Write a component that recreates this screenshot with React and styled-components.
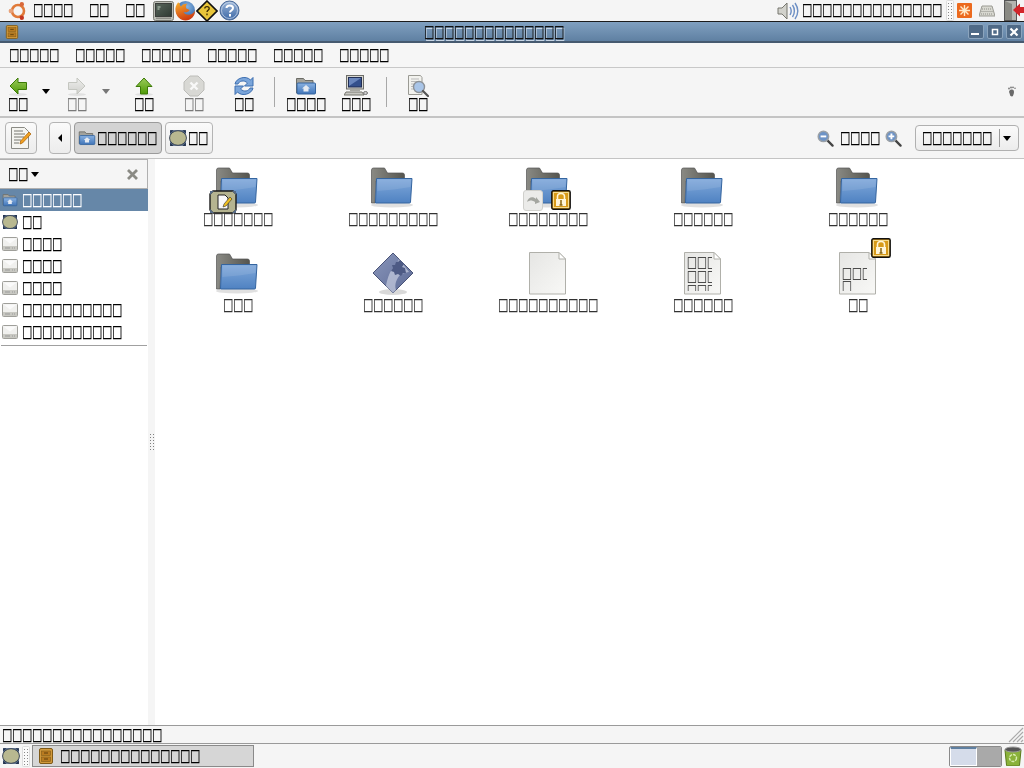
import React from 'react';
import styled, { createGlobalStyle } from 'styled-components';

const Global = createGlobalStyle`
  html, body { margin: 0; padding: 0; background: #f5f5f5; overflow: hidden; }
  * { box-sizing: border-box; }
`;

const tofu = n => '\u25A1'.repeat(n);

const Screen = styled.div`
  width: 1024px; height: 768px; display: flex; flex-direction: column; overflow: hidden;
  font-family: "DejaVu Sans", sans-serif; font-size: 10.58px; color: #000; background: #f5f5f5;
`;
const Label = styled.span`
  display: block; white-space: nowrap; line-height: 14px; height: 14px; will-change: transform;
  transform: translateY(-1px) scaleY(1.6);
  -webkit-text-stroke: 0.2px currentColor;
  color: ${p => p.$color || 'inherit'};
`;

/* ---------- top panel ---------- */
const TopPanel = styled.div`
  height: 22px; flex: none; display: flex; align-items: center; padding-left: 8px; background: #f5f5f5;
  border-bottom: 1px solid #1c1c1c;
`;
const PanelMenu = styled.div`margin-left: ${p => p.$ml}px; padding-bottom: 1px;`;
const PanelIcon = styled.div`
  flex: none; display: flex; width: ${p => p.$w}px; height: 21px; margin-left: ${p => p.$ml || 0}px; align-items: center; justify-content: center;
`;
const Spacer = styled.div`flex: 1;`;

/* ---------- title bar ---------- */
const TitleBar = styled.div`
  height: 21px; flex: none; display: flex; align-items: center; position: relative;
  background: linear-gradient(#80a0c0, #5f80a2); border-bottom: 2px solid #465a70; padding-left: 5px;
`;
const TitleText = styled.div`
  position: absolute; left: 424px; top: 3px; color: #111; text-shadow: 1px 1px 0 #c6d4e4;
`;
const WinButtons = styled.div`margin-left: auto; display: flex; gap: 3px; padding-right: 2px;`;
const WinButton = styled.div`
  width: 16px; height: 15px; border: 1px solid #8ba4bd; border-radius: 2px; background: #4f6a87;
  display: flex; align-items: center; justify-content: center;
`;

/* ---------- menu ---------- */
const MenuBar = styled.div`
  height: 25px; flex: none; display: flex; gap: 16px; padding: 5px 0 0 9px; background: #f6f6f6;
  border-bottom: 1px solid #c8c8c8;
`;

/* ---------- toolbar ---------- */
const Toolbar = styled.div`
  height: 50px; flex: none; display: flex; align-items: flex-start; background: #f5f5f5;
  border-bottom: 2px solid #c4c4c4;
`;
const ToolButton = styled.div`
  width: ${p => p.$w}px; flex: none; height: 100%;
  display: flex; flex-direction: column; align-items: center; padding-top: 7px;
  color: ${p => p.$off ? '#7a7a7a' : '#000'};
`;
const ToolIcon = styled.div`width: ${p => p.$w || 22}px; height: 22px;`;
const DropArrow = styled.div`
  width: ${p => p.$w}px; flex: none; height: 100%; display: flex; justify-content: center; padding-top: 21px;
  &::after { content: ''; width: 0; height: 0; border: 4px solid transparent; border-bottom: 0; border-top: 5px solid ${p => p.$off ? '#777' : '#000'}; }
`;
const ToolSep = styled.div`
  width: 1px; height: 30px; margin: 9px 0 0 ${p => p.$ml}px; background: #a8a8a8; flex: none;
`;
const Throbber = styled.div`margin-left: auto; padding: 18px 8px 0 0;`;

/* ---------- location bar ---------- */
const LocationBar = styled.div`
  height: 41px; flex: none; display: flex; align-items: center; padding-left: 5px;
  background: #f5f5f5; border-bottom: 1px solid #c4c4c4;
`;
const CrumbButton = styled.div`
  height: 32px; width: ${p => p.$w}px; margin-left: ${p => p.$ml || 0}px; flex: none;
  border: 1px solid ${p => p.$on ? '#9b9b9b' : '#b4b4b4'}; border-radius: 4px;
  background: ${p => p.$on ? '#d3d3d3' : 'linear-gradient(#fafafa, #ececec)'};
  display: flex; align-items: center; justify-content: ${p => p.$center ? 'center' : 'flex-start'}; padding-left: ${p => p.$center ? 0 : 3}px; gap: 1px;
`;
const LeftCaret = styled.div`
  width: 0; height: 0; border: 4px solid transparent; border-left: 0; border-right: 4px solid #000;
`;
const ZoomGroup = styled.div`margin-left: auto; display: flex; align-items: center;`;
const ZoomText = styled.div`margin: 0 5px 0 6px;`;
const Combo = styled.div`
  width: 104px; height: 26px; margin: 0 5px 0 13px; border: 1px solid #b0b0b0; border-radius: 4px;
  background: linear-gradient(#fafafa, #ececec); display: flex; align-items: center; padding-left: 6px;
`;
const ComboDivider = styled.div`width: 1px; height: 18px; background: #9a9a9a; margin-left: 7px;`;
const ComboArrow = styled.div`
  margin-left: 3px; width: 0; height: 0; border: 4px solid transparent; border-bottom: 0; border-top: 5px solid #000;
`;

/* ---------- body ---------- */
const Body = styled.div`flex: 1; min-height: 0; display: flex;`;
const Sidebar = styled.div`width: 148px; flex: none; background: #fff; display: flex; flex-direction: column;`;
const SideHeader = styled.div`
  height: 30px; flex: none; background: #f5f5f5; border: 1px solid #b0b0b0; border-left: 0; display: flex; align-items: center; padding: 0 8px;
`;
const SideCaret = styled.div`
  margin-left: 3px; width: 0; height: 0; border: 4px solid transparent; border-bottom: 0; border-top: 5px solid #000;
`;
const SideClose = styled.div`margin-left: auto; display: flex;`;
const SideRow = styled.div`
  height: 22px; flex: none; display: flex; align-items: center; gap: 4px; padding-left: 2px;
  background: ${p => p.$on ? '#6687a8' : 'transparent'}; color: ${p => p.$on ? '#fff' : '#000'};
`;
const SideRule = styled.div`height: 1px; margin: 2px 1px 0; background: #a0a0a0;`;
const Splitter = styled.div`
  width: 7px; flex: none; background: #f5f5f5; display: flex; align-items: center; justify-content: center;
`;
const Grip = styled.div`
  width: 6px; height: 18px;
  background-image: radial-gradient(#808080 0.9px, transparent 1px);
  background-size: 3px 3px;
`;
const IconGrid = styled.div`
  flex: 1; background: #fff; display: grid; grid-template-columns: repeat(5, 155px); grid-auto-rows: 86px; align-content: start; padding: 6px 0 0 5px;
`;
const Cell = styled.div`display: flex; flex-direction: column; align-items: center;`;
const BigIcon = styled.div`width: 48px; height: 48px; position: relative;`;
const Emblem = styled.div`position: absolute; left: ${p => p.$x}px; top: ${p => p.$y}px; display: flex;`;
const CellLabel = styled(Label)`color: #333; margin-top: -1px;`;
const DocSvg = styled.svg`display: block; will-change: transform;`;

/* ---------- status ---------- */
const StatusBar = styled.div`
  height: 19px; flex: none; display: flex; align-items: center; padding-left: 2px;
  background: #f5f5f5; border-top: 1px solid #9a9a9a; border-bottom: 1px solid #9a9a9a; position: relative;
`;
const ResizeGrip = styled.div`position: absolute; right: 0; bottom: 0; display: flex;`;

/* ---------- bottom panel ---------- */
const BottomPanel = styled.div`
  height: 24px; flex: none; display: flex; align-items: center; padding-left: 2px; background: #f5f5f5;
`;
const Task = styled.div`
  width: 222px; height: 22px; margin-left: 2px; background: #d6d6d6; border: 1px solid #8a8a8a; display: flex; align-items: center; padding-left: 5px; gap: 6px;
`;
const Workspace = styled.div`
  margin-left: auto; width: 53px; height: 21px; display: flex; border: 1px solid #8a8a8a; border-radius: 2px; overflow: hidden;
`;
const WsActive = styled.div`flex: 1; background: #d5dcea; border: 1px solid #fff; border-top: 2px solid #5f7fa0;`;
const WsIdle = styled.div`flex: 1; background: #a9a9a9;`;
const TrashSlot = styled.div`margin: 0 2px 0 2px; display: flex;`;

/* ---------- icons ---------- */
const Ubuntu = () => (
  <svg width="20" height="20" viewBox="0 0 20 20">
    <circle cx="10" cy="10" r="6" fill="none" stroke="#e07a3a" strokeWidth="2.6" />
    <circle cx="2.800" cy="10" r="2.200" fill="#e8a27a" />
    <circle cx="13.800" cy="3.200" r="2.200" fill="#d9683a" />
    <circle cx="13.800" cy="16.800" r="2.200" fill="#c4351f" />
  </svg>
);
const Terminal = () => (
  <svg width="21" height="20" viewBox="0 0 21 20">
    <defs><linearGradient id="tms" x1="0" y1="0" x2="1" y2="1"><stop offset="0" stopColor="#59665c" /><stop offset="1" stopColor="#2f3a33" /></linearGradient></defs>
    <rect x="0.500" y="0.500" width="20" height="19" rx="2" fill="#bcbeb6" stroke="#7c7d76" />
    <rect x="2.500" y="2.500" width="16" height="13" fill="url(#tms)" stroke="#3c3f3c" />
    <path d="M4.500 6h3M4.500 8h2" stroke="#c4d6c4" />
    <rect x="3" y="16.500" width="15" height="1.500" fill="#8d8e88" />
  </svg>
);
const Firefox = () => (
  <svg width="22" height="22" viewBox="0 0 22 22">
    <defs><radialGradient id="ffg" cx="0.6" cy="0.3" r="0.7"><stop offset="0" stopColor="#86b4e2" /><stop offset="1" stopColor="#2a5b9e" /></radialGradient>
    <linearGradient id="fff" x1="0" y1="0" x2="0.4" y2="1"><stop offset="0" stopColor="#f7b02e" /><stop offset="1" stopColor="#cf3d10" /></linearGradient></defs>
    <circle cx="11.500" cy="10.500" r="9.500" fill="url(#ffg)" />
    <path d="M4 2.500C2 5 1 8 1.500 11c.8 5.500 5 9.500 10 9.500 5.500 0 9.700-4.500 9.500-10-1 2-2.500 3.500-4.500 4-3 1-6.500-.5-7-2.500 2 .8 5 0 6-1.500.3-1-1.500-1.500-3-1.800C11.500 7 11.500 5 13.500 3.800 10 3.500 8 5 7 6.500 6 5.500 5.500 4 5.500 3 5 3 4.500 2.800 4 2.500z" fill="url(#fff)" />
  </svg>
);
const HelpDiamond = () => (
  <svg width="22" height="22" viewBox="0 0 22 22">
    <path d="M11 1l10 10-10 10L1 11z" fill="#e8c53a" stroke="#111" strokeWidth="1.600" />
    <path d="M8.800 8.500c0-2.500 4.400-2.500 4.400 0 0 1.800-2.200 1.800-2.200 3.500M11 13.500v1.800" fill="none" stroke="#3a2a00" strokeWidth="1.300" />
  </svg>
);
const HelpCircle = () => (
  <svg width="21" height="21" viewBox="0 0 21 21">
    <defs><linearGradient id="hcg" x1="0" y1="0" x2="0" y2="1"><stop offset="0" stopColor="#9cb6d8" /><stop offset="1" stopColor="#3b67a6" /></linearGradient></defs>
    <circle cx="10.500" cy="10.500" r="9.500" fill="url(#hcg)" stroke="#4a6a99" />
    <circle cx="10.500" cy="10.500" r="8" fill="none" stroke="#d5e0ee" strokeOpacity="0.7" />
    <path d="M7.500 8c0-3.500 6.500-3.500 6.500 0 0 2.500-3 2.500-3 4.500M11 14v2.500" fill="none" stroke="#fff" strokeWidth="2" />
  </svg>
);
const Speaker = () => (
  <svg width="22" height="20" viewBox="0 0 22 20">
    <path d="M1 7h4l5-5v16l-5-5H1z" fill="#d2d2cc" stroke="#77776f" />
    <path d="M13 6c1.500 2.500 1.500 5.500 0 8M15.500 4c2.500 3.500 2.500 8.500 0 12M18 2c3.500 5 3.500 11 0 16" fill="none" stroke="#6d8fc4" strokeWidth="1.400" />
  </svg>
);
const HandleDots = () => (
  <svg width="8" height="21" viewBox="0 0 8 21">
    <rect x="0.500" y="0.500" width="7" height="20" rx="1" fill="#fafafa" stroke="#ddd" />
    {[3, 6, 9, 12, 15, 18].map(y => <g key={y}><rect x="2" y={y} width="1" height="1" fill="#888" /><rect x="5" y={y} width="1" height="1" fill="#888" /></g>)}
  </svg>
);
const Notifier = () => (
  <svg width="15" height="15" viewBox="0 0 15 15">
    <rect width="15" height="15" rx="1" fill="#ec6a1e" />
    <path d="M7.500 2v11M2 7.500h11M3.500 3.500l8 8M11.500 3.500l-8 8" stroke="#ffe9c8" strokeWidth="1.400" />
  </svg>
);
const Keyboard = () => (
  <svg width="16" height="12" viewBox="0 0 16 12">
    <path d="M3 1h10l3 10H0z" fill="#d8d8d0" stroke="#9a9a92" />
    <path d="M3 4h10M2.500 6.500h11M2 9h12" stroke="#8e8e88" strokeDasharray="1 1" />
  </svg>
);
const Door = () => (
  <svg width="20" height="21" viewBox="0 0 20 21">
    <rect x="0.500" y="0.500" width="12" height="20" fill="#b5b5b0" stroke="#555" />
    <path d="M1 1l7 3v16H1z" fill="#8a8a84" />
    <path d="M20 7h-4V3.500L9 10l7 6.500V13h4z" fill="#d2262a" />
  </svg>
);
const Cabinet = ({ s = 16 }) => (
  <svg width={s} height={s} viewBox="0 0 16 16" style={{ flex: 'none' }}>
    <rect x="1.500" y="0.500" width="13" height="15" rx="1.500" fill="#d29a3c" stroke="#7f5a18" />
    <rect x="3.500" y="3" width="9" height="4.500" fill="#b97b20" stroke="#7f5a18" strokeWidth="0.600" />
    <rect x="3.500" y="9" width="9" height="4.500" fill="#b97b20" stroke="#7f5a18" strokeWidth="0.600" />
    <path d="M6 5h4M6 11h4" stroke="#5c3f0c" />
  </svg>
);
const Arrow = ({ dir, off }) => {
  const from = off ? '#eeeeec' : '#9ccb5c', to = off ? '#cfd0cc' : '#4e9a06', line = off ? '#c4c6c0' : '#3c7a06';
  const id = `ar${dir}${off ? 'o' : ''}`;
  const d = dir === 'left' ? 'M3 11l8-8v4.500h8.500v7H11V19z' : dir === 'right' ? 'M19 11l-8-8v4.500H2.500v7H11V19z' : 'M11 3l8 8.500h-4.500V19h-7v-7.500H3z';
  return (
    <svg width="22" height="22" viewBox="0 0 22 22">
      <defs><linearGradient id={id} x1="0" y1="0" x2="0" y2="1"><stop offset="0" stopColor={from} /><stop offset="1" stopColor={to} /></linearGradient></defs>
      <ellipse cx="11" cy="19.500" rx="9" ry="1.500" fill="#000" opacity="0.08" />
      <path d={d} fill={`url(#${id})`} stroke={line} />
    </svg>
  );
};
const Stop = () => (
  <svg width="22" height="22" viewBox="0 0 22 22">
    <path d="M7 1h8l6 6v8l-6 6H7l-6-6V7z" fill="#d8d8d4" stroke="#bcbcb8" strokeLinejoin="round" />
    <path d="M7.500 7.500l7 7M14.500 7.500l-7 7" stroke="#f8f8f8" strokeWidth="2.400" />
  </svg>
);
const Reload = () => (
  <svg width="22" height="22" viewBox="0 0 22 22">
    <path d="M2 9C3 3 13 0 17.500 5L20 2.500V11h-8.500l3-3C11 4.500 6 6 5 9z" fill="#7aa5da" stroke="#3d6eb0" />
    <path d="M20 13c-1 6-11 9-15.500 4L2 19.500V11h8.500l-3 3C11 17.500 16 16 17 13z" fill="#7aa5da" stroke="#3d6eb0" />
  </svg>
);
const HomeFolder = ({ s = 22 }) => (
  <svg width={s} height={s} viewBox="0 0 22 22" style={{ flex: 'none' }}>
    <defs><linearGradient id="hfb" x1="0" y1="0" x2="0" y2="1"><stop offset="0" stopColor="#8ab2e2" /><stop offset="1" stopColor="#3f74b8" /></linearGradient></defs>
    <path d="M1.500 18V3.500h7l1.500 2h8V18z" fill="#a2a29c" stroke="#6c6c66" />
    <rect x="2" y="8" width="18.500" height="11" rx="1" fill="url(#hfb)" stroke="#34649f" />
    <path d="M11 10l4 3.500h-1.500V16.500h-5V13.500H7z" fill="#e4eaf2" />
  </svg>
);
const Computer = () => (
  <svg width="24" height="22" viewBox="0 0 24 22">
    <rect x="2.500" y="0.500" width="17" height="13.500" fill="#d6d6d0" stroke="#6d6d68" />
    <rect x="4.500" y="2.500" width="13" height="9.500" fill="#34508c" stroke="#222f55" />
    <path d="M5 3h12L5 11z" fill="#6a86bc" />
    <path d="M6 14v2h10v-2z" fill="#a8a8a2" />
    <path d="M2 17h16l2 3H0z" fill="#c8c8c2" stroke="#77776f" />
    <ellipse cx="21.500" cy="18" rx="2" ry="1.500" fill="#ccc" stroke="#777" />
  </svg>
);
const Magnifier = ({ size = 22, sym }) => (
  <svg width={size} height={size} viewBox="0 0 18 18" style={{ display: 'block' }}>
    <path d="M10.500 10.500L16.500 16.500" stroke="#444" strokeWidth="2.400" strokeLinecap="round" />
    <circle cx="6.800" cy="6.800" r="5.500" fill="#6d93c6" stroke="#9aa0a6" strokeWidth="1.600" />
    {sym === 'minus' && <path d="M3.800 6.800h6" stroke="#fff" strokeWidth="2" />}
    {sym === 'plus' && <path d="M3.800 6.800h6M6.800 3.800v6" stroke="#fff" strokeWidth="2" />}
  </svg>
);
const SearchDoc = () => (
  <svg width="22" height="22" viewBox="0 0 22 22">
    <path d="M1.500 0.500h12l1.500 2v17H1.500z" fill="#f2f2ee" stroke="#9a9a94" />
    <path d="M4 4h8M4 6.500h8M4 9h5M4 11.500h4M4 14h4" stroke="#bbb" />
    <circle cx="12" cy="12" r="5.500" fill="#a9c5e8" stroke="#8d9298" strokeWidth="1.400" />
    <path d="M16 16l5 5" stroke="#555" strokeWidth="2.200" strokeLinecap="round" />
  </svg>
);
const Foot = () => (
  <svg width="9" height="11" viewBox="0 0 9 11">
    <path d="M3 4c3-1 4 0 4 2 0 2-1 3-1 4-1 1-3 0-3-1 0-2-2-3 0-5z" fill="#6a6a6a" />
    <circle cx="2" cy="2.500" r="0.900" fill="#777" /><circle cx="4" cy="1.500" r="0.900" fill="#777" /><circle cx="6" cy="1.300" r="0.900" fill="#777" /><circle cx="8" cy="2.200" r="0.800" fill="#777" />
  </svg>
);
const NoteIcon = () => (
  <svg width="22" height="24" viewBox="0 0 22 24">
    <path d="M1.500 1.500h13l4 4v17h-17z" fill="#f4f4f0" stroke="#8a8a84" />
    <path d="M4 5h9M4 8h11M4 11h10M4 14h7M4 17h5" stroke="#77776f" />
    <path d="M10 18l.6-3L19 6l2 2-8.500 9z" fill="#f0a020" stroke="#a65c00" strokeWidth="0.700" />
  </svg>
);
const Network = ({ s = 16 }) => (
  <svg width={s} height={s} viewBox="0 0 16 16" style={{ flex: 'none' }}>
    <rect x="1" y="1" width="14" height="14" fill="#5a6f8c" />
    <ellipse cx="8" cy="8" rx="7.500" ry="6.500" fill="#b8b890" stroke="#2e3a4e" strokeWidth="0.800" />
    <path d="M1 1l3 0-3 3zM15 1l-3 0 3 3zM1 15l3 0-3-3zM15 15l-3 0 3-3z" fill="#24344f" />
  </svg>
);
const CloseX = () => (
  <svg width="13" height="13" viewBox="0 0 13 13">
    <path d="M2 2l9 9M11 2l-9 9" stroke="#8a8a84" strokeWidth="2.800" />
  </svg>
);
const Drive = () => (
  <svg width="16" height="16" viewBox="0 0 16 16" style={{ flex: 'none' }}>
    <rect x="0.500" y="1.500" width="15" height="13" rx="1" fill="#f0f0ee" stroke="#9f9f9a" />
    <path d="M1.500 2.500l6.500 5 6.500-5z" fill="#fafafa" />
    <rect x="1" y="10" width="14" height="4" fill="#c8c8c2" />
    <path d="M3 12h5M10 12h1M12 12h1" stroke="#999" />
  </svg>
);
const BigFolder = () => (
  <svg width="48" height="48" viewBox="1 0 48 48" style={{ display: 'block' }}>
    <defs>
      <linearGradient id="bfg" x1="0" y1="0" x2="1" y2="0"><stop offset="0" stopColor="#8a8a84" /><stop offset="1" stopColor="#55554f" /></linearGradient>
      <linearGradient id="bfb" x1="0" y1="0" x2="0" y2="1"><stop offset="0" stopColor="#80a8da" /><stop offset="1" stopColor="#4f82c2" /></linearGradient>
    </defs>
    <ellipse cx="24" cy="40" rx="21" ry="2.500" fill="#000" opacity="0.12" />
    <path d="M3.500 38V5q0-2 2-2h11l3 5h15q2 0 2 2v6H8l-1 22z" fill="url(#bfg)" stroke="#555" strokeWidth="0.700" />
    <path d="M8.500 13.500H44L42.500 37a1 1 0 0 1-1 1H7.500z" fill="url(#bfb)" stroke="#34649f" />
    <path d="M9.500 14.500H43L42.500 22C32 24 20 25 9.300 26z" fill="#fff" opacity="0.1" />
  </svg>
);
const Package = () => (
  <svg width="48" height="48" viewBox="0 0 48 48" style={{ display: 'block' }}>
    <defs><linearGradient id="pkg" x1="0" y1="0" x2="1" y2="1"><stop offset="0" stopColor="#8a96ba" /><stop offset="1" stopColor="#5c6a96" /></linearGradient></defs>
    <ellipse cx="24" cy="41" rx="14" ry="3" fill="#000" opacity="0.15" />
    <path d="M24 2l20 20-20 20L4 22z" fill="url(#pkg)" stroke="#4a5478" />
    <path d="M30 8c-2 6-8 10-10 16-2 5-3 10-3 11l7 7 3-3c-2-6 1-12 5-16 4-1 6-2 8-2z" fill="#c8cde0" opacity="0.7" />
    <path d="M31 9l4 4-2 3 3 1 1 5-3 0-2 3-3-2-3 1-1-3-3-1 2-3-1-3 3 0 1-3 2 0z" fill="#4d5a84" />
  </svg>
);
const Doc = ({ lines, clip, first = 11, pitch = 14 }) => (
  <DocSvg width="48" height="48" viewBox="1 0 48 48">
    <defs>
      <linearGradient id="dcg" x1="0" y1="0" x2="1" y2="1"><stop offset="0" stopColor="#e6e6e4" /><stop offset="1" stopColor="#f8f8f6" /></linearGradient>
      <clipPath id={`dc${clip}`}><rect x="8" y="2" width="26" height="38" /></clipPath>
    </defs>
    <path d="M6.500 1.500H36l6.500 6.500v35H6.500z" fill="url(#dcg)" stroke="#b0b0aa" />
    <path d="M36 1.500V8h6.500z" fill="#fff" stroke="#b0b0aa" />
    {lines && (
      <g clipPath={`url(#dc${clip})`}>
        {lines.map((l, i) => (
          <text key={i} transform={`translate(9 ${first + 5.5 + i * pitch}) scale(1 1.4)`} fontFamily="DejaVu Sans" fontSize="10.58" fill="#111">{tofu(l)}</text>
        ))}
      </g>
    )}
  </DocSvg>
);
const EmblemNote = () => (
  <svg width="28" height="24" viewBox="0 0 28 24">
    <path d="M4 1h20l3 3v16l-3 3H4l-3-3V4z" fill="#b5b490" stroke="#1a1a1a" strokeWidth="1.400" />
    <path d="M1 1h4L1 5zM27 1h-4l4 4zM1 23h4l-4-4zM27 23h-4l4-4z" fill="#566b86" />
    <path d="M9 5h7l3 3v11H9z" fill="#fafafa" stroke="#222" />
    <path d="M14 17l1-3 6-7 2 2-6 7z" fill="#f0c020" stroke="#333" strokeWidth="0.600" />
  </svg>
);
const EmblemLink = () => (
  <svg width="20" height="21" viewBox="0 0 20 21">
    <rect x="0.500" y="0.500" width="19" height="20" rx="2.500" fill="#ebebe9" stroke="#d0d0cc" />
    <path d="M4 12c1-5 6-6 9-3V7l4 5-5 2v-2c-3-2-5-2-8 0z" fill="#a4a6a0" />
  </svg>
);
const EmblemLock = () => (
  <svg width="20" height="20" viewBox="0 0 20 20">
    <rect x="0.800" y="0.800" width="18.400" height="18.400" rx="1.500" fill="#d89a18" stroke="#111" strokeWidth="1.400" />
    <rect x="2.500" y="2.500" width="15" height="15" fill="none" stroke="#f6dc90" />
    <path d="M6.500 9V6.500a3.500 3 0 0 1 7 0V9" fill="none" stroke="#fff5d8" strokeWidth="1.600" />
    <rect x="5" y="9" width="10" height="7" fill="#fff5d8" />
    <path d="M10 10v5M8.500 15h3" stroke="#8a6510" strokeWidth="1.500" />
  </svg>
);
const ResizeLines = () => (
  <svg width="16" height="16" viewBox="0 0 16 16">
    <path d="M15 1L1 15M15 5L5 15M15 9l-6 6M15 13l-2 2" stroke="#aaa" strokeWidth="1.200" />
  </svg>
);
const Trash = () => (
  <svg width="18" height="20" viewBox="0 0 18 20">
    <path d="M1 4h16l-1.500 15a1 1 0 0 1-1 1H3.500a1 1 0 0 1-1-1z" fill="#8ab23a" stroke="#5a7a1a" />
    <ellipse cx="9" cy="3.500" rx="8" ry="2.500" fill="#555" stroke="#999" />
    <circle cx="9" cy="12" r="3.500" fill="none" stroke="#d8ecb0" strokeWidth="1.400" strokeDasharray="3 1" />
  </svg>
);

const items = [
  { n: 7, icon: <BigFolder />, emblems: [{ x: -5, y: 25, el: <EmblemNote /> }] },
  { n: 9, icon: <BigFolder /> },
  { n: 8, icon: <BigFolder />, emblems: [{ x: -1, y: 25, el: <EmblemLink /> }, { x: 27, y: 25, el: <EmblemLock /> }] },
  { n: 6, icon: <BigFolder /> },
  { n: 6, icon: <BigFolder /> },
  { n: 3, icon: <BigFolder /> },
  { n: 6, icon: <Package /> },
  { n: 10, icon: <Doc clip="b" /> },
  { n: 6, icon: <Doc clip="c" lines={[3, 3, 3]} first={10} /> },
  { n: 2, icon: <Doc clip="d" lines={[3, 1]} first={21} pitch={13} />, emblems: [{ x: 37, y: -13, el: <EmblemLock /> }] },
];
const places = [
  { n: 6, icon: <HomeFolder s={16} />, on: true },
  { n: 2, icon: <Network /> },
  { n: 4, icon: <Drive /> },
  { n: 4, icon: <Drive /> },
  { n: 4, icon: <Drive /> },
  { n: 10, icon: <Drive /> },
  { n: 10, icon: <Drive /> },
];

export default function App() {
  return (
    <Screen>
      <Global />
      <TopPanel>
        <PanelIcon $w={20}><Ubuntu /></PanelIcon>
        <PanelMenu $ml={5}><Label>{tofu(4)}</Label></PanelMenu>
        <PanelMenu $ml={16}><Label>{tofu(2)}</Label></PanelMenu>
        <PanelMenu $ml={16}><Label>{tofu(2)}</Label></PanelMenu>
        <PanelIcon $w={21} $ml={8}><Terminal /></PanelIcon>
        <PanelIcon $w={22}><Firefox /></PanelIcon>
        <PanelIcon $w={22}><HelpDiamond /></PanelIcon>
        <PanelIcon $w={21} $ml={1}><HelpCircle /></PanelIcon>
        <Spacer />
        <PanelIcon $w={22}><Speaker /></PanelIcon>
        <PanelMenu $ml={3}><Label>{tofu(14)}</Label></PanelMenu>
        <PanelIcon $w={8} $ml={4}><HandleDots /></PanelIcon>
        <PanelIcon $w={15} $ml={3}><Notifier /></PanelIcon>
        <PanelIcon $w={16} $ml={7}><Keyboard /></PanelIcon>
        <PanelIcon $w={20} $ml={9}><Door /></PanelIcon>
      </TopPanel>
      <TitleBar>
        <Cabinet s={14} />
        <TitleText><Label>{tofu(14)}</Label></TitleText>
        <WinButtons>
          <WinButton><svg width="10" height="9" viewBox="0 0 10 9"><rect x="0" y="6" width="8" height="2" fill="#fff" /></svg></WinButton>
          <WinButton><svg width="8" height="8" viewBox="0 0 8 8"><rect x="1.500" y="1.500" width="5" height="5" fill="none" stroke="#fff" strokeWidth="1.500" /></svg></WinButton>
          <WinButton><svg width="10" height="10" viewBox="0 0 10 10"><path d="M1.500 1.500l7 7M8.500 1.500l-7 7" stroke="#fff" strokeWidth="2.200" /></svg></WinButton>
        </WinButtons>
      </TitleBar>
      <MenuBar>
        {[0, 1, 2, 3, 4, 5].map(i => <Label key={i}>{tofu(5)}</Label>)}
      </MenuBar>
      <Toolbar>
        <ToolButton $w={36}><ToolIcon><Arrow dir="left" /></ToolIcon><Label>{tofu(2)}</Label></ToolButton>
        <DropArrow $w={20} />
        <ToolButton $w={42} $off><ToolIcon><Arrow dir="right" off /></ToolIcon><Label>{tofu(2)}</Label></ToolButton>
        <DropArrow $w={16} $off />
        <ToolButton $w={60}><ToolIcon><Arrow dir="up" /></ToolIcon><Label>{tofu(2)}</Label></ToolButton>
        <ToolButton $w={40} $off><ToolIcon><Stop /></ToolIcon><Label>{tofu(2)}</Label></ToolButton>
        <ToolButton $w={60}><ToolIcon><Reload /></ToolIcon><Label>{tofu(2)}</Label></ToolButton>
        <ToolSep $ml={0} />
        <ToolButton $w={62}><ToolIcon><HomeFolder /></ToolIcon><Label>{tofu(4)}</Label></ToolButton>
        <ToolButton $w={38}><ToolIcon $w={24}><Computer /></ToolIcon><Label>{tofu(3)}</Label></ToolButton>
        <ToolSep $ml={11} />
        <ToolButton $w={62}><ToolIcon><SearchDoc /></ToolIcon><Label>{tofu(2)}</Label></ToolButton>
        <Throbber><Foot /></Throbber>
      </Toolbar>
      <LocationBar>
        <CrumbButton $w={32} $center><NoteIcon /></CrumbButton>
        <CrumbButton $w={22} $ml={12} $center><LeftCaret /></CrumbButton>
        <CrumbButton $w={88} $ml={3} $on><HomeFolder s={18} /><Label>{tofu(6)}</Label></CrumbButton>
        <CrumbButton $w={48} $ml={3}><Network s={18} /><Label>{tofu(2)}</Label></CrumbButton>
        <ZoomGroup>
          <Magnifier size={17} sym="minus" />
          <ZoomText><Label>{tofu(4)}</Label></ZoomText>
          <Magnifier size={17} sym="plus" />
          <Combo><Label>{tofu(7)}</Label><ComboDivider /><ComboArrow /></Combo>
        </ZoomGroup>
      </LocationBar>
      <Body>
        <Sidebar>
          <SideHeader><Label>{tofu(2)}</Label><SideCaret /><SideClose><CloseX /></SideClose></SideHeader>
          {places.map((p, i) => (
            <SideRow key={i} $on={p.on}>{p.icon}<Label>{tofu(p.n)}</Label></SideRow>
          ))}
          <SideRule />
        </Sidebar>
        <Splitter><Grip /></Splitter>
        <IconGrid>
          {items.map((it, i) => (
            <Cell key={i}>
              <BigIcon>
                {it.icon}
                {it.emblems && it.emblems.map((e, j) => <Emblem key={j} $x={e.x} $y={e.y}>{e.el}</Emblem>)}
              </BigIcon>
              <CellLabel>{tofu(it.n)}</CellLabel>
            </Cell>
          ))}
        </IconGrid>
      </Body>
      <StatusBar>
        <Label>{tofu(16)}</Label>
        <ResizeGrip><ResizeLines /></ResizeGrip>
      </StatusBar>
      <BottomPanel>
        <Network s={18} />
        <PanelIcon $w={8} $ml={2}><HandleDots /></PanelIcon>
        <Task><Cabinet s={16} /><Label>{tofu(14)}</Label></Task>
        <Workspace><WsActive /><WsIdle /></Workspace>
        <TrashSlot><Trash /></TrashSlot>
      </BottomPanel>
    </Screen>
  );
}
